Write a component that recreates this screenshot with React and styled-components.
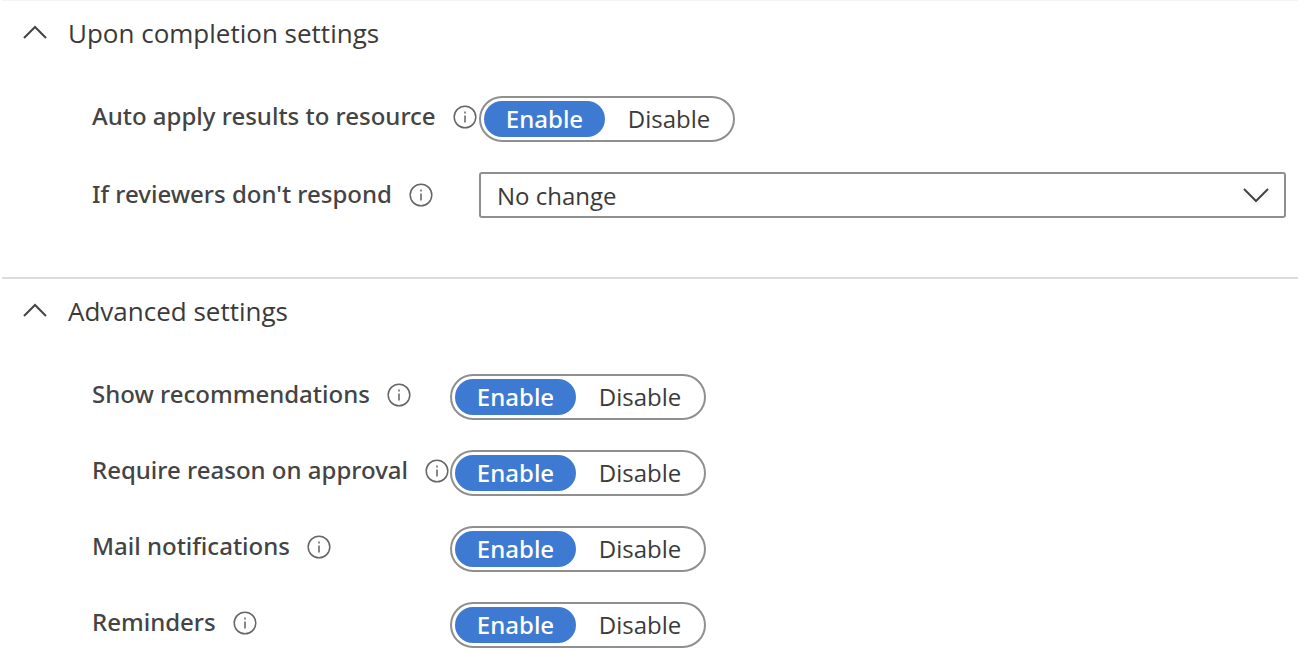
import React, { useId, useState } from 'react';
import styled, { createGlobalStyle } from 'styled-components';

const GlobalStyle = createGlobalStyle`
  * {
    box-sizing: border-box;
  }

  body {
    margin: 0;
    background: #fff;
    color: #3b3a39;
    font-family: 'Open Sans', 'Noto Sans', sans-serif;
    font-size: 24px;
  }

  button,
  select {
    font: inherit;
    color: inherit;
  }
`;

const Page = styled.main`
  padding: 0 6px 0 2px;
`;

const Section = styled.section`
  border-top: 2px solid #dcdcdc;
  padding-bottom: 59px;

  &:first-child {
    border-top: 1px solid #f4f4f4;
  }

  &:last-child {
    padding-bottom: 0;
  }
`;

const SectionTitle = styled.h2`
  margin: 0;
  font-size: 26px;
  font-weight: 400;
`;

const SectionToggle = styled.button`
  display: flex;
  align-items: center;
  gap: 20px;
  width: 100%;
  height: 64px;
  padding: 0 20px;
  border: 0;
  background: none;
  text-align: left;
  cursor: pointer;
`;

const Rows = styled.div`
  display: flex;
  flex-direction: column;
  gap: 30px;
  padding: 31px 12px 0 90px;
`;

const Row = styled.div`
  display: grid;
  grid-template-columns: ${({ $labelWidth }) => $labelWidth}px minmax(0, 1fr);
  align-items: ${({ $raised }) => ($raised ? 'start' : 'center')};
`;

const LabelCell = styled.div`
  display: flex;
  align-items: center;
  gap: 17px;
  height: 42px;
  color: #444;
  font-family: 'Noto Sans', 'Open Sans', sans-serif;
  font-weight: 500;
  white-space: nowrap;

  label,
  span {
    padding-bottom: 3px;
  }

  svg {
    flex-shrink: 0;
  }
`;

const Switch = styled.div`
  display: grid;
  grid-template-columns: 121px 1fr;
  justify-self: start;
  width: 256px;
  height: 46px;
  padding: 3px;
  border: 2px solid #8f8f8f;
  border-radius: 23px;
`;

const Option = styled.label`
  position: relative;
  display: flex;
  align-items: center;
  justify-content: center;
  padding: 0 0 2px 3px;
  border-radius: 18px;
  cursor: pointer;

  &:has(input:checked) {
    padding-left: 0;
    background: #3e7ad1;
    color: #fff;
    font-family: 'Noto Sans', 'Open Sans', sans-serif;
    font-weight: 500;
  }

  input {
    position: absolute;
    inset: 0;
    margin: 0;
    opacity: 0;
    cursor: pointer;
  }
`;

const SelectBox = styled.div`
  display: grid;
  align-items: center;
  height: 46px;

  > * {
    grid-area: 1 / 1;
  }

  svg {
    justify-self: end;
    margin-right: 17px;
    pointer-events: none;
  }
`;

const Select = styled.select`
  width: 100%;
  height: 46px;
  padding: 0 56px 0 16px;
  border: 2px solid #8f8f8f;
  border-radius: 3px;
  background: #fff;
  appearance: none;
`;

function Chevron({ down }) {
  return (
    <svg width="26" height="16" viewBox="0 0 26 16" fill="none" aria-hidden="true">
      <path
        d={down ? 'M1 2L13 14L25 2' : 'M2 13L13 2L24 13'}
        stroke="#444"
        strokeWidth="2"
      />
    </svg>
  );
}

function InfoIcon() {
  return (
    <svg width="24" height="24" viewBox="0 0 24 24" fill="none" aria-hidden="true">
      <circle cx="12" cy="12" r="10.8" stroke="#666" strokeWidth="1.5" />
      <path d="M12 10.5V17.5M12 6.5V8.5" stroke="#888" strokeWidth="2" />
    </svg>
  );
}

function SettingsSection({ title, children }) {
  const [open, setOpen] = useState(true);

  return (
    <Section>
      <SectionTitle>
        <SectionToggle aria-expanded={open} onClick={() => setOpen(!open)}>
          <Chevron down={!open} />
          {title}
        </SectionToggle>
      </SectionTitle>
      {open && <Rows>{children}</Rows>}
    </Section>
  );
}

function SwitchRow({ label, labelWidth }) {
  const id = useId();

  return (
    <Row $labelWidth={labelWidth} $raised>
      <LabelCell>
        <span id={id}>{label}</span>
        <InfoIcon />
      </LabelCell>
      <Switch role="radiogroup" aria-labelledby={id}>
        <Option>
          <input type="radio" name={`${id}-switch`} defaultChecked />
          Enable
        </Option>
        <Option>
          <input type="radio" name={`${id}-switch`} />
          Disable
        </Option>
      </Switch>
    </Row>
  );
}

const advanced = [
  'Show recommendations',
  'Require reason on approval',
  'Mail notifications',
  'Reminders',
];

export default function App() {
  return (
    <>
      <GlobalStyle />
      <Page>
        <SettingsSection title="Upon completion settings">
          <SwitchRow label="Auto apply results to resource" labelWidth={387} />
          <Row $labelWidth={387}>
            <LabelCell>
              <label htmlFor="no-response">If reviewers don&apos;t respond</label>
              <InfoIcon />
            </LabelCell>
            <SelectBox>
              <Select id="no-response">
                <option>No change</option>
              </Select>
              <Chevron down />
            </SelectBox>
          </Row>
        </SettingsSection>
        <SettingsSection title="Advanced settings">
          {advanced.map((label) => (
            <SwitchRow key={label} label={label} labelWidth={358} />
          ))}
        </SettingsSection>
      </Page>
    </>
  );
}
